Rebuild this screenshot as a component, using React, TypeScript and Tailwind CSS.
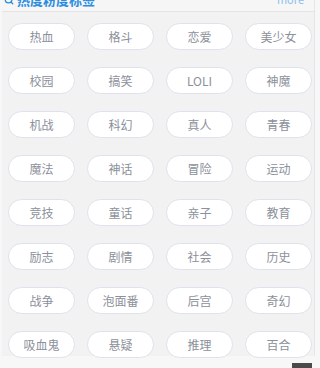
import { Search } from 'lucide-react';

const tags = [
  '热血', '格斗', '恋爱', '美少女',
  '校园', '搞笑', 'LOLI', '神魔',
  '机战', '科幻', '真人', '青春',
  '魔法', '神话', '冒险', '运动',
  '竞技', '童话', '亲子', '教育',
  '励志', '剧情', '社会', '历史',
  '战争', '泡面番', '后宫', '奇幻',
  '吸血鬼', '悬疑', '推理', '百合',
];

export default function App() {
  return (
    <div
      className="relative w-[320px] h-[368px] overflow-hidden bg-[#f7f7f7]"
      style={{ fontFamily: '"Noto Sans CJK SC", "Noto Sans", sans-serif' }}
    >
      <div className="w-[313px] ml-[2px] h-full bg-[#f2f2f2] border-r border-[#e6e6e6]">
        {/* Header */}
        <div className="-mt-[12px] h-[24px] bg-[#f6f6f6] border-b border-[#e4e4e4] flex items-center justify-between pl-[2px] pr-[10px]">
          <div className="flex items-center gap-[3px] text-[#2b8de0]">
            <Search className="w-[10px] h-[10px]" strokeWidth={3} />
            <span className="text-[13px] font-bold leading-none">热度粉度标签</span>
          </div>
          <span className="text-[11px] leading-none text-[#8fc0ec]">more</span>
        </div>

        {/* Tags */}
        <div className="grid grid-cols-[67px_67px_67px_67px] gap-x-[12px] gap-y-[17px] pl-[6px] pt-[11px]">
          {tags.map((tag) => (
            <div
              key={tag}
              className="h-[27px] rounded-full bg-white border border-[#dfe2ec] flex items-center justify-center text-[12px] text-[#8c909b]"
            >
              {tag}
            </div>
          ))}
        </div>
      </div>

      {/* Back to top */}
      <div className="absolute left-[292px] top-[363px] w-[20px] h-[20px] bg-[#4a4a4a]" />
    </div>
  );
}
